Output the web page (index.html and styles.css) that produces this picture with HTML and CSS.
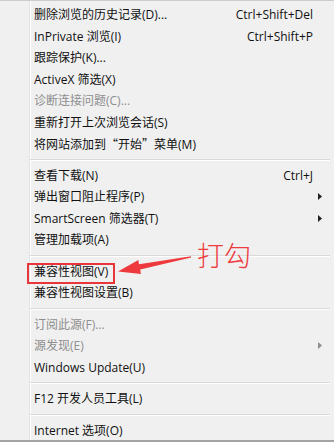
FILE: index.html
```html
<!DOCTYPE html>
<html lang="zh-CN">
<head>
<meta charset="utf-8">
<title>工具菜单</title>
<link rel="stylesheet" href="styles.css">
</head>
<body>
<div class="menu">
  <div class="group">
    <div class="item"><span class="label">删除浏览的历史记录(D)...</span><span class="key">Ctrl+Shift+Del</span><span class="tail"></span></div>
    <div class="item"><span class="label">InPrivate 浏览(I)</span><span class="key">Ctrl+Shift+P</span><span class="tail"></span></div>
    <div class="item"><span class="label">跟踪保护(K)...</span><span class="tail"></span></div>
    <div class="item"><span class="label">ActiveX 筛选(X)</span><span class="tail"></span></div>
    <div class="item disabled"><span class="label">诊断连接问题(C)...</span><span class="tail"></span></div>
    <div class="item"><span class="label">重新打开上次浏览会话(S)</span><span class="tail"></span></div>
    <div class="item"><span class="label">将网站添加到<span class="cjk">“</span>开始<span class="cjk">”</span>菜单(M)</span><span class="tail"></span></div>
  </div>
  <div class="sep"></div>
  <div class="group">
    <div class="item"><span class="label">查看下载(N)</span><span class="key">Ctrl+J</span><span class="tail"></span></div>
    <div class="item"><span class="label">弹出窗口阻止程序(P)</span><span class="tail"><svg class="arrow" width="4" height="7" viewBox="0 0 4 7"><polygon points="0,0 4,3.5 0,7"/></svg></span></div>
    <div class="item"><span class="label">SmartScreen 筛选器(T)</span><span class="tail"><svg class="arrow" width="4" height="7" viewBox="0 0 4 7"><polygon points="0,0 4,3.5 0,7"/></svg></span></div>
    <div class="item"><span class="label">管理加载项(A)</span><span class="tail"></span></div>
  </div>
  <div class="sep"></div>
  <div class="group">
    <div class="item"><span class="label marked">兼容性视图(V)</span><span class="tail"></span></div>
    <div class="item"><span class="label">兼容性视图设置(B)</span><span class="tail"></span></div>
  </div>
  <div class="sep"></div>
  <div class="group">
    <div class="item disabled"><span class="label">订阅此源(F)...</span><span class="tail"></span></div>
    <div class="item disabled"><span class="label">源发现(E)</span><span class="tail"><svg class="arrow" width="4" height="7" viewBox="0 0 4 7"><polygon points="0,0 4,3.5 0,7"/></svg></span></div>
    <div class="item"><span class="label">Windows Update(U)</span><span class="tail"></span></div>
  </div>
  <div class="sep"></div>
  <div class="group">
    <div class="item"><span class="label">F12 开发人员工具(L)</span><span class="tail"></span></div>
  </div>
  <div class="sep"></div>
  <div class="group">
    <div class="item"><span class="label">Internet 选项(O)</span><span class="tail"></span></div>
  </div>

  <svg class="pointer" width="334" height="442" viewBox="0 0 334 442">
    <polygon points="118,271.5 138.3,260 139,264.3 191,256.3 191,257.6 140.2,269.6 140.9,274"/>
  </svg>
  <div class="note">打勾</div>
</div>
</body>
</html>
```

FILE: styles.css
```css
html, body {
  margin: 0;
  padding: 0;
  background: #f0f0f0;
}

.menu {
  position: relative;
  width: 334px;
  height: 442px;
  box-sizing: border-box;
  padding-top: 3px;
  border-top: 1px solid #c9cdd1;
  border-bottom: 2px solid #a3a3a3;
  background-color: #f0f0f0;
  background-image: linear-gradient(to right, transparent 29px, #e2e3e3 29px, #e2e3e3 30px, #ffffff 30px, #ffffff 31px, transparent 31px);
  font-family: "Open Sans", "Noto Sans CJK SC", sans-serif;
  font-size: 12px;
  color: #111111;
  overflow: hidden;
}

.group {
  display: flex;
  flex-direction: column;
}

.item {
  display: flex;
  align-items: center;
  height: 21.5px;
  line-height: 21.5px;
  padding-left: 34px;
  white-space: nowrap;
}

.item .label {
  flex: 1;
}

.cjk {
  font-family: "Noto Sans CJK SC", sans-serif;
}

.item .key {
  color: #111111;
}

.item .tail {
  width: 21px;
  display: flex;
  align-items: center;
  padding-left: 5px;
  box-sizing: border-box;
}

.arrow polygon {
  fill: #222222;
}

.disabled {
  color: #8e8e8e;
}

.disabled .arrow polygon {
  fill: #8e8e8e;
}

.sep {
  height: 10px;
  margin-left: 30px;
  margin-right: 4px;
  display: flex;
  flex-direction: column;
  justify-content: center;
}

.sep::before {
  content: "";
  display: block;
  height: 1px;
  background: #d9d9d9;
}

.sep::after {
  content: "";
  display: block;
  height: 1px;
  background: #ffffff;
}

.marked {
  position: relative;
  flex: 0 0 auto !important;
}

.marked::after {
  content: "";
  position: absolute;
  left: -7px;
  right: -7px;
  top: 2px;
  bottom: -2px;
  border: 2px solid #e8363b;
}

.pointer {
  position: absolute;
  left: 0;
  top: -1px;
  pointer-events: none;
}

.pointer polygon {
  fill: #ee3a3e;
}

.note {
  position: absolute;
  left: 197px;
  top: 240px;
  font-family: "Noto Sans CJK SC", serif;
  font-weight: 300;
  font-size: 27px;
  line-height: 27px;
  color: #ee3b3e;
}
```
